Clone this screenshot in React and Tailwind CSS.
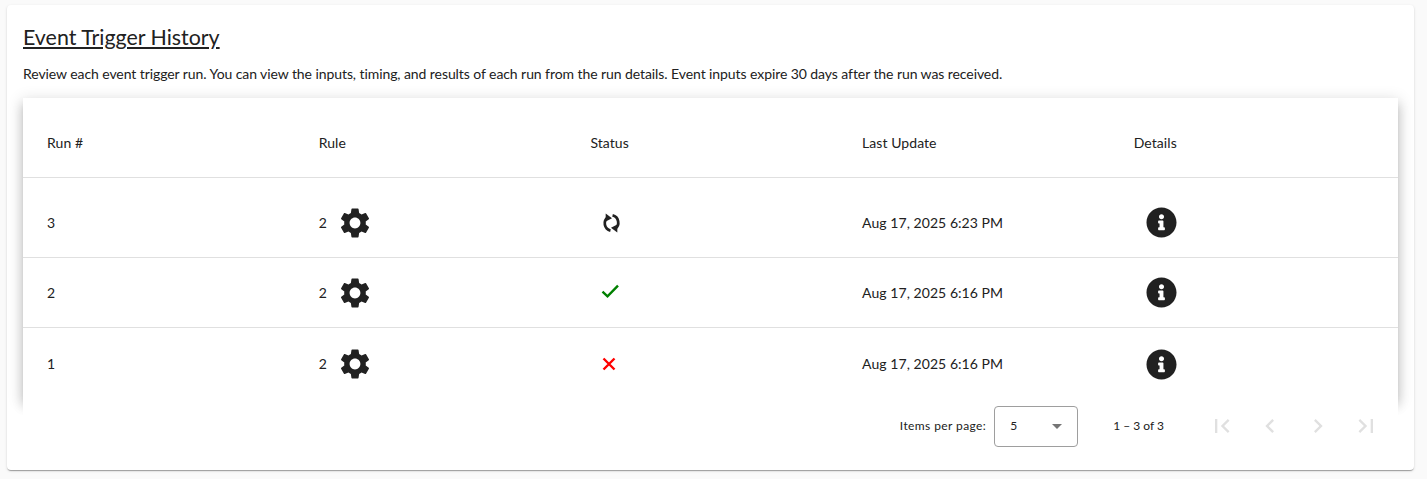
import { FaInfoCircle } from "react-icons/fa";
import {
  MdChevronLeft,
  MdChevronRight,
  MdFirstPage,
  MdLastPage,
  MdSettings,
} from "react-icons/md";

const rows = [
  { run: 3, time: "Aug 17, 2025 6:23 PM", status: "running", className: "h-20 pt-[10px] border-b" },
  { run: 2, time: "Aug 17, 2025 6:16 PM", status: "ok", className: "h-[70px] border-b" },
  { run: 1, time: "Aug 17, 2025 6:16 PM", status: "failed", className: "h-[70px] pt-[2px]" },
];

const gridCols = "grid grid-cols-[271.7px_271.7px_271.7px_271.7px_1fr] items-center pl-6 tracking-[0.06px]";

function SyncIcon() {
  return (
    <svg width="19" height="20" viewBox="0 0 18 19" fill="none" className="ml-3 text-[#212121]">
      <path d="M8 16.7A7 7 0 0 1 5.5 4.2" stroke="currentColor" strokeWidth="2.6" />
      <path d="M10 2.3A7 7 0 0 1 12.5 14.8" stroke="currentColor" strokeWidth="2.6" />
      <path d="M3.5 0.5L9.5 5L3.5 8Z" fill="currentColor" />
      <path d="M14.5 18.5L8.5 14L14.5 11Z" fill="currentColor" />
    </svg>
  );
}

function StatusIcon({ status }) {
  if (status === "running") return <SyncIcon />;
  if (status === "ok") {
    return (
      <svg width="18" height="16" viewBox="0 0 18 16" fill="none" className="-mt-[2px] ml-[11px] text-[#008000]">
        <path d="M1.5 7.7L6.5 12.3L17 1.7" stroke="currentColor" strokeWidth="2.4" />
      </svg>
    );
  }
  return (
    <svg width="14" height="14" viewBox="0 0 14 14" fill="none" className="ml-3 text-[#ff0000]">
      <path d="M1.5 1.5L12.5 12.5M12.5 1.5L1.5 12.5" stroke="currentColor" strokeWidth="2.4" />
    </svg>
  );
}

export default function App() {
  return (
    <div className="min-h-[479px] bg-[#fafafa] pt-[5px] pl-[7px] pr-[13px] font-['Lato',sans-serif] text-[#212121]">
      <div className="h-[465px] rounded bg-white px-4 pt-4 shadow-[0_2px_1px_-1px_rgba(0,0,0,0.2),0_1px_1px_0_rgba(0,0,0,0.14),0_1px_3px_0_rgba(0,0,0,0.12)]">
        <h1 className="text-[21.4px] leading-8 underline">Event Trigger History</h1>
        <p className="mt-[11px] text-sm leading-5 tracking-[-0.077px]">
          Review each event trigger run. You can view the inputs, timing, and results of each run from the run details. Event inputs expire 30 days after the run was received.
        </p>

        <div className="mt-[14px] h-[300px] shadow-[0_5px_5px_-3px_rgba(0,0,0,0.2),0_8px_10px_1px_rgba(0,0,0,0.14),0_3px_14px_2px_rgba(0,0,0,0.12)]">
          <div className={`${gridCols} h-20 border-b border-[#e0e0e0] pt-[10px] text-sm`}>
            <div>Run #</div>
            <div>Rule</div>
            <div>Status</div>
            <div>Last Update</div>
            <div>Details</div>
          </div>

          {rows.map((row) => (
            <div key={row.run} className={`${gridCols} ${row.className} border-[#e0e0e0] bg-white text-sm`}>
              <div>{row.run}</div>
              <div className="flex items-center gap-[10px]">
                2
                <MdSettings size={36} className="text-[#212121]" />
              </div>
              <div>
                <StatusIcon status={row.status} />
              </div>
              <div>{row.time}</div>
              <div>
                <FaInfoCircle size={31} className="ml-3 text-[#212121]" />
              </div>
            </div>
          ))}
        </div>

        <div className="relative flex h-14 items-center justify-end bg-white pr-2 text-xs">
          <span className="tracking-[0.4px]">Items per page:</span>
          <div className="mr-[35px] ml-2 flex h-[41px] w-[84px] items-center justify-between rounded border border-[#9e9e9e] px-[15px]">
            <span>5</span>
            <span className="h-0 w-0 border-x-[5px] border-t-[5px] border-x-transparent border-t-[#757575]" />
          </div>
          <span className="mr-[34px]">1 – 3 of 3</span>
          <div className="flex text-[#e0e0e0]">
            <span className="flex w-12 justify-center"><MdFirstPage size={28} /></span>
            <span className="flex w-12 justify-center"><MdChevronLeft size={28} /></span>
            <span className="flex w-12 justify-center"><MdChevronRight size={28} /></span>
            <span className="flex w-12 justify-center"><MdLastPage size={28} /></span>
          </div>
        </div>
      </div>
    </div>
  );
}
